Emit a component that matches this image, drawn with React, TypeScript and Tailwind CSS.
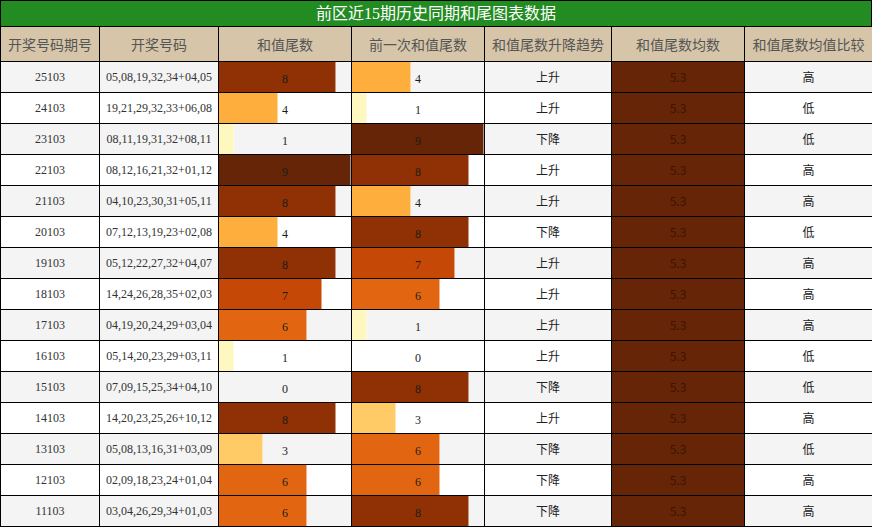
import React from 'react';

type Row = [string, string, number, number, string, string];

const rows: Row[] = [
  ['25103', '05,08,19,32,34+04,05', 8, 4, '上升', '高'],
  ['24103', '19,21,29,32,33+06,08', 4, 1, '上升', '低'],
  ['23103', '08,11,19,31,32+08,11', 1, 9, '下降', '低'],
  ['22103', '08,12,16,21,32+01,12', 9, 8, '上升', '高'],
  ['21103', '04,10,23,30,31+05,11', 8, 4, '上升', '高'],
  ['20103', '07,12,13,19,23+02,08', 4, 8, '下降', '低'],
  ['19103', '05,12,22,27,32+04,07', 8, 7, '上升', '高'],
  ['18103', '14,24,26,28,35+02,03', 7, 6, '上升', '高'],
  ['17103', '04,19,20,24,29+03,04', 6, 1, '上升', '高'],
  ['16103', '05,14,20,23,29+03,11', 1, 0, '上升', '低'],
  ['15103', '07,09,15,25,34+04,10', 0, 8, '下降', '低'],
  ['14103', '14,20,23,25,26+10,12', 8, 3, '上升', '高'],
  ['13103', '05,08,13,16,31+03,09', 3, 6, '下降', '低'],
  ['12103', '02,09,18,23,24+01,04', 6, 6, '下降', '高'],
  ['11103', '03,04,26,29,34+01,03', 6, 8, '下降', '高'],
];

// YlOrBr style scale, keyed by tail digit
const barColor: Record<number, string> = {
  1: 'bg-[#fff7c0]',
  2: 'bg-[#fee392]',
  3: 'bg-[#fecb66]',
  4: 'bg-[#feae3c]',
  5: 'bg-[#f58a22]',
  6: 'bg-[#e26612]',
  7: 'bg-[#c64806]',
  8: 'bg-[#8f3104]',
  9: 'bg-[#662506]',
};

const headers = ['开奖号码期号', '开奖号码', '和值尾数', '前一次和值尾数', '和值尾数升降趋势', '和值尾数均数', '和值尾数均值比较'];
const widths = ['w-[99px]', 'w-[119px]', 'w-[133px]', 'w-[133px]', 'w-[127px]', 'w-[133px]', 'w-[128px]'];

const serif = "font-['Liberation_Serif','Noto_Sans_CJK_SC',serif]";
const sans = "font-['Noto_Sans_CJK_SC',sans-serif]";

const BarCell: React.FC<{ value: number }> = ({ value }) => (
  <td className="relative border border-black p-0 text-center">
    {value > 0 && (
      <div
        className={`absolute left-0 top-0 bottom-0 border-r border-white/50 ${barColor[value]}`}
        style={{ width: `${(value / 9) * 100}%` }}
      />
    )}
    <span className={`relative text-[12px] text-[#1c1c1c] ${serif}`}>{value}</span>
  </td>
);

export default function App() {
  return (
    <div className="w-[872px] h-[527px] overflow-hidden bg-white">
      <div className="flex h-[26px] items-center justify-center border border-b-0 border-black bg-[#228b22] text-[16px] text-white font-['Liberation_Serif','Noto_Sans_CJK_SC',sans-serif]">
        前区近15期历史同期和尾图表数据
      </div>
      <table className="w-[872px] table-fixed border-collapse border border-black">
        <colgroup>
          {widths.map((w, i) => (
            <col key={i} className={w} />
          ))}
        </colgroup>
        <thead>
          <tr className="h-[35px] bg-[#d6c5a9]">
            {headers.map((h) => (
              <th key={h} className={`border border-black p-0 text-[14px] font-normal text-[#555] ${sans}`}>
                {h}
              </th>
            ))}
          </tr>
        </thead>
        <tbody>
          {rows.map((r, i) => (
            <tr key={r[0]} className={`h-[31px] ${i % 2 === 0 ? 'bg-[#f4f4f4]' : 'bg-white'}`}>
              <td className={`border border-black p-0 text-center text-[12px] text-[#333] ${serif}`}>{r[0]}</td>
              <td className={`border border-black p-0 text-center text-[12px] text-[#333] ${serif}`}>{r[1]}</td>
              <BarCell value={r[2]} />
              <BarCell value={r[3]} />
              <td className={`border border-black p-0 text-center text-[12px] text-[#222] ${sans}`}>{r[4]}</td>
              <td className={`border border-black bg-[#662506] p-0 text-center text-[12px] text-[#3a1505] ${sans}`}>5.3</td>
              <td className={`border border-black p-0 text-center text-[12px] text-[#222] ${sans}`}>{r[5]}</td>
            </tr>
          ))}
        </tbody>
      </table>
    </div>
  );
}
